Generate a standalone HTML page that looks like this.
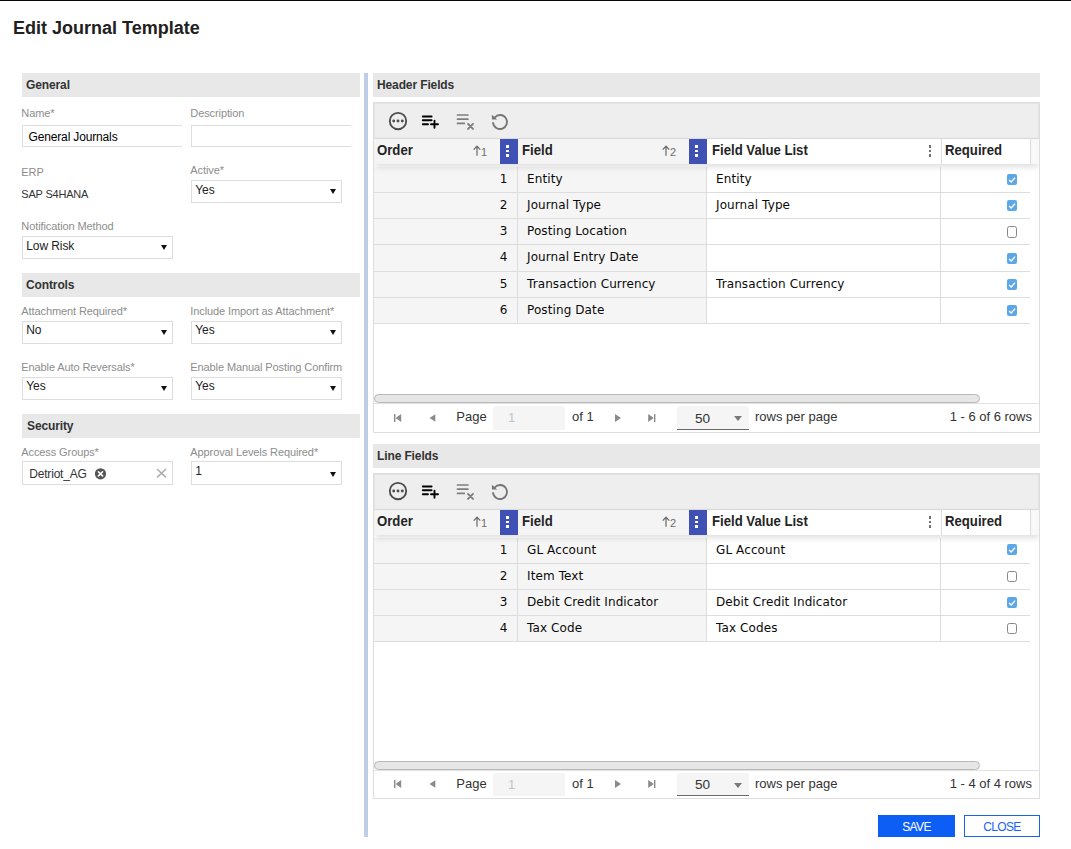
<!DOCTYPE html>
<html lang="en">
<head>
<meta charset="utf-8">
<title>Edit Journal Template</title>
<style>
*{box-sizing:border-box;margin:0;padding:0}
html,body{width:1071px;height:849px;overflow:hidden;background:#fff}
body{position:relative;font-family:"Liberation Sans",Arial,sans-serif;color:#333;font-size:12px}
.abs{position:absolute}
.topline{left:0;top:0;width:1071px;height:1px;background:#080808}
h1{position:absolute;left:13px;top:18px;font-size:18px;line-height:21px;font-weight:bold;color:#212121;white-space:nowrap}
.bar{position:absolute;height:24px;background:#e8e8e8;font-weight:bold;font-size:12px;line-height:24px;color:#333;padding-left:4px;white-space:nowrap;letter-spacing:-.12px}
.lbl{position:absolute;font-size:11px;line-height:13px;color:#8d8d8d;white-space:nowrap;letter-spacing:-.1px;margin-left:-.7px}
.inp{position:absolute;height:22px;border:1px solid #ddd;border-right:none;background:#fff;font-size:12px;line-height:20px;padding:1px 0 0 5.5px;color:#000;white-space:nowrap;letter-spacing:-.15px}
.val{position:absolute;font-size:11px;line-height:13px;color:#333;white-space:nowrap;letter-spacing:-.2px;margin-left:-.7px}
.sel{position:absolute;height:23px;width:151px;border:1px solid #ddd;background:#fff;font-size:12px;line-height:14px;padding:.6px 0 0 3.3px;color:#222;white-space:nowrap;letter-spacing:-.1px}
.sel:after{content:"";position:absolute;right:5.5px;top:8px;border-left:3.7px solid transparent;border-right:3.7px solid transparent;border-top:5px solid #111}
.sel.tall{padding-top:1.5px}
.sel.tall:after{top:9.5px}
.splitter{left:364px;top:73px;width:4px;height:764px;background:#bfcde8}

/* grid */
.grid{position:absolute;left:373px;width:667px;border:1px solid #ddd;background:#fff;overflow:hidden}
.tb{position:absolute;left:0;top:0;width:665px;height:36px;background:#eee;border:1px solid #e4e4e4;border-bottom:1px solid #dcdcdc}
.tb svg{position:absolute;left:0;top:0}
.hd{position:absolute;left:1px;top:36px;width:664px;height:25px;background:#fff;box-shadow:0 3px 6px rgba(0,0,0,.13);z-index:2;font-family:"Liberation Sans",Arial,sans-serif;font-weight:bold;font-size:13px;color:#1a1a1a}
.hc{position:absolute;top:0;height:25px;line-height:23px;white-space:nowrap;letter-spacing:-.1px}
.hc.fz{background:#f4f4f4}
.hc b{display:inline-block;font-size:14px;font-weight:bold;color:#242424;transform:scaleX(.94);transform-origin:0 50%;letter-spacing:0}
.mb{position:absolute;top:0;width:18px;height:25px;background:#3f51b5}
.mb i,.dots i{position:absolute;left:6.2px;width:2.6px;height:2.6px;background:#fff}
.dots i{background:#707070}
#g2 .cb{top:6.8px}
#g2 .pin{height:23px;line-height:23px}
#g2 .psel{height:23px;line-height:24px}
#g2 .pg svg{top:-1.7px}
#g2 .pg span{line-height:26.4px}
#g2 .cb.off{top:7.3px;height:11px}
.srt{position:absolute;top:0;height:26px;color:#757575;font-weight:normal}
.srt svg{position:absolute;left:0;top:6px}
.srt span{position:absolute;left:8.1px;top:.5px;font-size:11px;line-height:25px;color:#6c6c6c}
.bd{position:absolute;left:0;top:64px;letter-spacing:.1px;width:656px;font-family:"DejaVu Sans",Verdana,sans-serif;font-size:12px;color:#0a0a0a}
.r{position:relative;height:26.2px;border-bottom:1px solid #ddd;width:656px}
.c{position:absolute;top:0;bottom:0;line-height:25px;white-space:nowrap;border-right:1px solid #ddd}
.c1{left:0;width:144px;background:#f5f5f5;text-align:right;padding-right:9.4px}
.c2{left:144px;width:189px;background:#f5f5f5;padding-left:9px}
.c3{left:333px;width:234px;padding-left:9px}
.c4{left:567px;width:89px;border-right:none}
.cb{position:absolute;left:66px;top:7.5px;width:10px;height:11px;border-radius:2px;background:#5ca7e8}
.cb svg{position:absolute;left:0;top:0}
.cb.off{background:#fff;border:1px solid #868686;border-radius:2.5px;top:7px;height:12px}
.hs{position:absolute;left:0;width:606px;height:9px;border:1px solid #b9b9b9;border-radius:5px;background:#e6e6e6}
.pg{position:absolute;left:0;width:665px;height:29px;border-top:1px solid #e2e2e2;font-size:13px;color:#333;white-space:nowrap}
.pg span{position:absolute;top:0;line-height:25px}
.pg svg{position:absolute;left:0;top:-1px}
.pin{position:absolute;left:119px;top:2px;width:72px;height:24px;background:#f5f5f5;border-radius:3px 3px 0 0;color:#c2c2c2;padding-left:15px;line-height:24px}
.psel{position:absolute;left:303px;top:2px;width:72px;height:24px;background:#f5f5f5;border-radius:3px 3px 0 0;border-bottom:1px solid #6a6a6a;line-height:25px;padding-left:18px;color:#333;font-size:13.6px}
.psel:after{content:"";position:absolute;right:7px;top:10px;border-left:4px solid transparent;border-right:4px solid transparent;border-top:5.5px solid #7a7a7a}
.btn{position:absolute;top:815px;height:22px;width:77px;font-size:12px;line-height:24px;text-align:center;letter-spacing:-.65px}
</style>
</head>
<body>
<div class="abs topline"></div>
<h1>Edit Journal Template</h1>

<!-- LEFT PANEL -->
<div class="bar" style="left:22px;top:73px;width:338px">General</div>
<div class="lbl" style="left:22px;top:107px">Name*</div>
<div class="inp" style="left:22px;top:125px;width:160px">General Journals</div>
<div class="lbl" style="left:191px;top:107px">Description</div>
<div class="inp" style="left:191px;top:125px;width:160px"></div>
<div class="lbl" style="left:22px;top:166px">ERP</div>
<div class="val" style="left:22px;top:188px">SAP S4HANA</div>
<div class="lbl" style="left:191px;top:164px">Active*</div>
<div class="sel" style="left:191px;top:180px;padding-top:1.5px">Yes</div>
<div class="lbl" style="left:22px;top:220px">Notification Method</div>
<div class="sel" style="left:22px;top:236px;padding-top:1.5px">Low Risk</div>

<div class="bar" style="left:22px;top:273px;width:338px">Controls</div>
<div class="lbl" style="left:22px;top:305px">Attachment Required*</div>
<div class="sel" style="left:22px;top:321px">No</div>
<div class="lbl" style="left:191px;top:305px">Include Import as Attachment*</div>
<div class="sel" style="left:191px;top:321px">Yes</div>
<div class="lbl" style="left:22px;top:361px">Enable Auto Reversals*</div>
<div class="sel" style="left:22px;top:377px">Yes</div>
<div class="lbl" style="left:191px;top:361px">Enable Manual Posting Confirm</div>
<div class="sel" style="left:191px;top:377px">Yes</div>

<div class="bar" style="left:22px;top:414px;width:338px;padding-left:5px">Security</div>
<div class="lbl" style="left:22px;top:446px">Access Groups*</div>
<div class="abs" id="ms" style="left:22px;top:461px;width:151px;height:24px;border:1px solid #ddd;background:#fff">
  <span class="abs" style="left:6.3px;top:4.8px;font-size:12px;line-height:14px;color:#333;white-space:nowrap;letter-spacing:-.2px">Detriot_AG</span>
  <svg class="abs" style="left:71px;top:5px" width="13" height="13" viewBox="0 0 13 13"><circle cx="6.5" cy="6.8" r="5.6" fill="#555"/><path d="M4.4 4.7l4.2 4.2M8.6 4.7l-4.2 4.2" stroke="#fff" stroke-width="1.5" stroke-linecap="round"/></svg>
  <svg class="abs" style="left:133px;top:6px" width="11" height="11" viewBox="0 0 11 11"><path d="M1 1l9 8.4M10 1l-9 8.4" stroke="#adadad" stroke-width="1.5" fill="none"/></svg>
</div>
<div class="lbl" style="left:191px;top:446px">Approval Levels Required*</div>
<div class="sel tall" style="left:191px;top:461px;height:24px">1</div>

<div class="abs splitter"></div>

<!-- RIGHT PANEL -->
<div class="bar" style="left:373px;top:73px;width:667px;padding-left:4px">Header Fields</div>

<div class="grid" id="g1" style="top:102px;height:331px">
  <div class="tb">
    <svg width="160" height="36" viewBox="0 0 160 36">
      <g transform="translate(-375,-104)">
        <circle cx="398" cy="121" r="8.2" fill="none" stroke="#4d4d4d" stroke-width="1.85"/>
        <circle cx="393.7" cy="121" r="1.45" fill="#4d4d4d"/><circle cx="398" cy="121" r="1.45" fill="#4d4d4d"/><circle cx="402.3" cy="121" r="1.45" fill="#4d4d4d"/>
        <path d="M422.8 116.5h8.8M422.8 120.3h8.8M422.8 124.2h5.2M431 124.2h7M434.5 120.8v7" stroke="#000" stroke-width="1.9" stroke-linecap="round" fill="none"/>
        <path d="M457.5 115h10.4M457.5 119.2h10.4M457.5 123.4h6.8" stroke="#7d7d7d" stroke-width="1.7" stroke-linecap="round" fill="none"/>
        <path d="M468 123.9l5 5M473 123.9l-5 5" stroke="#7d7d7d" stroke-width="1.9" stroke-linecap="round" fill="none"/>
        <path d="M493.05 122.8A7 7 0 1 0 494.8 117.3" stroke="#767676" stroke-width="1.8" fill="none" stroke-linecap="round"/>
        <path d="M491.9 114.7l.1 4.9 5.2-.1z" fill="#767676"/>
      </g>
    </svg>
  </div>
  <div class="hd">
    <div class="hc fz" style="left:-1px;width:144px;padding-left:3.3px"><b>Order</b></div>
    <div class="srt" style="left:98px"><svg width="8" height="12" viewBox="0 0 8 12"><path d="M4 1.2v9.6M.7 4.6L4 1.2l3.3 3.4" stroke="#6e6e6e" stroke-width="1.25" fill="none"/></svg><span>1</span></div>
    <div class="mb" style="left:125px"><i style="top:6px"></i><i style="top:10.5px"></i><i style="top:15px"></i></div>
    <div class="hc fz" style="left:143px;width:189px;padding-left:4.3px"><b>Field</b></div>
    <div class="srt" style="left:287px"><svg width="8" height="12" viewBox="0 0 8 12"><path d="M4 1.2v9.6M.7 4.6L4 1.2l3.3 3.4" stroke="#6e6e6e" stroke-width="1.25" fill="none"/></svg><span>2</span></div>
    <div class="mb" style="left:314px"><i style="top:6px"></i><i style="top:10.5px"></i><i style="top:15px"></i></div>
    <div class="hc" style="left:332px;width:235px;padding-left:4.7px"><b>Field Value List</b></div>
    <div class="dots abs" style="left:547.7px;top:0;width:16px;height:25px"><i style="top:6px"></i><i style="top:10.5px"></i><i style="top:15px"></i></div>
    <div class="hc" style="left:566px;width:90px;padding-left:3.4px;border-left:1px solid #ddd;border-right:1px solid #ddd"><b>Required</b></div>
    <div class="hc" style="left:656px;width:9px;background:#f8f8f8"></div>
  </div>
  <div class="bd" style="top:63.8px">
    <div class="r"><div class="c c1">1</div><div class="c c2">Entity</div><div class="c c3">Entity</div><div class="c c4"><div class="cb"><svg width="11" height="11" viewBox="0 0 11 11"><path d="M2.1 5.9l2.1 2.1 3.9-4.4" stroke="#fff" stroke-width="1.4" fill="none"/></svg></div></div></div>
    <div class="r"><div class="c c1">2</div><div class="c c2">Journal Type</div><div class="c c3">Journal Type</div><div class="c c4"><div class="cb"><svg width="11" height="11" viewBox="0 0 11 11"><path d="M2.1 5.9l2.1 2.1 3.9-4.4" stroke="#fff" stroke-width="1.4" fill="none"/></svg></div></div></div>
    <div class="r"><div class="c c1">3</div><div class="c c2">Posting Location</div><div class="c c3"></div><div class="c c4"><div class="cb off"></div></div></div>
    <div class="r"><div class="c c1">4</div><div class="c c2">Journal Entry Date</div><div class="c c3"></div><div class="c c4"><div class="cb"><svg width="11" height="11" viewBox="0 0 11 11"><path d="M2.1 5.9l2.1 2.1 3.9-4.4" stroke="#fff" stroke-width="1.4" fill="none"/></svg></div></div></div>
    <div class="r"><div class="c c1">5</div><div class="c c2">Transaction Currency</div><div class="c c3">Transaction Currency</div><div class="c c4"><div class="cb"><svg width="11" height="11" viewBox="0 0 11 11"><path d="M2.1 5.9l2.1 2.1 3.9-4.4" stroke="#fff" stroke-width="1.4" fill="none"/></svg></div></div></div>
    <div class="r"><div class="c c1">6</div><div class="c c2">Posting Date</div><div class="c c3"></div><div class="c c4"><div class="cb"><svg width="11" height="11" viewBox="0 0 11 11"><path d="M2.1 5.9l2.1 2.1 3.9-4.4" stroke="#fff" stroke-width="1.4" fill="none"/></svg></div></div></div>
  </div>
  <div class="hs" style="top:291px"></div>
  <div class="pg" style="top:300px">
    <svg width="300" height="28" viewBox="0 0 300 28"><g fill="#8a8a8a"><rect x="20" y="11" width="1.4" height="8"/><path d="M27.2 11v8l-5.6-4z"/><path d="M61.3 11.2v7.6l-5.8-3.8z"/><path d="M241 11v8l6-4z"/><path d="M274.2 11v8l5.6-4z"/><rect x="280" y="11" width="1.4" height="8"/></g></svg>
    <span style="left:82.3px">Page</span>
    <div class="pin">1</div>
    <span style="left:198px">of 1</span>
    <div class="psel">50</div>
    <span style="left:381px">rows per page</span>
    <span style="right:7px">1 - 6 of 6 rows</span>
  </div>
</div>

<div class="bar" style="left:373px;top:444px;width:667px;padding-left:4px">Line Fields</div>

<div class="grid" id="g2" style="top:473px;height:326px">
  <div class="tb">
    <svg width="160" height="36" viewBox="0 0 160 36">
      <g transform="translate(-375,-105)">
        <circle cx="398" cy="121" r="8.2" fill="none" stroke="#4d4d4d" stroke-width="1.85"/>
        <circle cx="393.7" cy="121" r="1.45" fill="#4d4d4d"/><circle cx="398" cy="121" r="1.45" fill="#4d4d4d"/><circle cx="402.3" cy="121" r="1.45" fill="#4d4d4d"/>
        <path d="M422.8 116.5h8.8M422.8 120.3h8.8M422.8 124.2h5.2M431 124.2h7M434.5 120.8v7" stroke="#000" stroke-width="1.9" stroke-linecap="round" fill="none"/>
        <path d="M457.5 115h10.4M457.5 119.2h10.4M457.5 123.4h6.8" stroke="#7d7d7d" stroke-width="1.7" stroke-linecap="round" fill="none"/>
        <path d="M468 123.9l5 5M473 123.9l-5 5" stroke="#7d7d7d" stroke-width="1.9" stroke-linecap="round" fill="none"/>
        <path d="M493.05 122.8A7 7 0 1 0 494.8 117.3" stroke="#767676" stroke-width="1.8" fill="none" stroke-linecap="round"/>
        <path d="M491.9 114.7l.1 4.9 5.2-.1z" fill="#767676"/>
      </g>
    </svg>
  </div>
  <div class="hd">
    <div class="hc fz" style="left:-1px;width:144px;padding-left:3.3px"><b>Order</b></div>
    <div class="srt" style="left:98px"><svg width="8" height="12" viewBox="0 0 8 12"><path d="M4 1.2v9.6M.7 4.6L4 1.2l3.3 3.4" stroke="#6e6e6e" stroke-width="1.25" fill="none"/></svg><span>1</span></div>
    <div class="mb" style="left:125px"><i style="top:6px"></i><i style="top:10.5px"></i><i style="top:15px"></i></div>
    <div class="hc fz" style="left:143px;width:189px;padding-left:4.3px"><b>Field</b></div>
    <div class="srt" style="left:287px"><svg width="8" height="12" viewBox="0 0 8 12"><path d="M4 1.2v9.6M.7 4.6L4 1.2l3.3 3.4" stroke="#6e6e6e" stroke-width="1.25" fill="none"/></svg><span>2</span></div>
    <div class="mb" style="left:314px"><i style="top:6px"></i><i style="top:10.5px"></i><i style="top:15px"></i></div>
    <div class="hc" style="left:332px;width:235px;padding-left:4.7px"><b>Field Value List</b></div>
    <div class="dots abs" style="left:547.7px;top:0;width:16px;height:25px"><i style="top:6px"></i><i style="top:10.5px"></i><i style="top:15px"></i></div>
    <div class="hc" style="left:566px;width:90px;padding-left:3.4px;border-left:1px solid #ddd;border-right:1px solid #ddd"><b>Required</b></div>
    <div class="hc" style="left:656px;width:9px;background:#f8f8f8"></div>
  </div>
  <div class="bd" style="top:63.5px">
    <div class="r"><div class="c c1">1</div><div class="c c2">GL Account</div><div class="c c3">GL Account</div><div class="c c4"><div class="cb"><svg width="11" height="11" viewBox="0 0 11 11"><path d="M2.1 5.9l2.1 2.1 3.9-4.4" stroke="#fff" stroke-width="1.4" fill="none"/></svg></div></div></div>
    <div class="r"><div class="c c1">2</div><div class="c c2">Item Text</div><div class="c c3"></div><div class="c c4"><div class="cb off"></div></div></div>
    <div class="r"><div class="c c1">3</div><div class="c c2">Debit Credit Indicator</div><div class="c c3">Debit Credit Indicator</div><div class="c c4"><div class="cb"><svg width="11" height="11" viewBox="0 0 11 11"><path d="M2.1 5.9l2.1 2.1 3.9-4.4" stroke="#fff" stroke-width="1.4" fill="none"/></svg></div></div></div>
    <div class="r"><div class="c c1">4</div><div class="c c2">Tax Code</div><div class="c c3">Tax Codes</div><div class="c c4"><div class="cb off"></div></div></div>
  </div>
  <div class="hs" style="top:287px"></div>
  <div class="pg" style="top:296px">
    <svg width="300" height="28" viewBox="0 0 300 28"><g fill="#8a8a8a"><rect x="20" y="11" width="1.4" height="8"/><path d="M27.2 11v8l-5.6-4z"/><path d="M61.3 11.2v7.6l-5.8-3.8z"/><path d="M241 11v8l6-4z"/><path d="M274.2 11v8l5.6-4z"/><rect x="280" y="11" width="1.4" height="8"/></g></svg>
    <span style="left:82.3px">Page</span>
    <div class="pin">1</div>
    <span style="left:198px">of 1</span>
    <div class="psel">50</div>
    <span style="left:381px">rows per page</span>
    <span style="right:7px">1 - 4 of 4 rows</span>
  </div>
</div>

<div class="btn" style="left:878px;background:#0d5ef4;color:#fff">SAVE</div>
<div class="btn" style="left:964px;width:76px;background:#fff;color:#1763f0;border:1px solid #1763f0;line-height:22px">CLOSE</div>
</body>
</html>
